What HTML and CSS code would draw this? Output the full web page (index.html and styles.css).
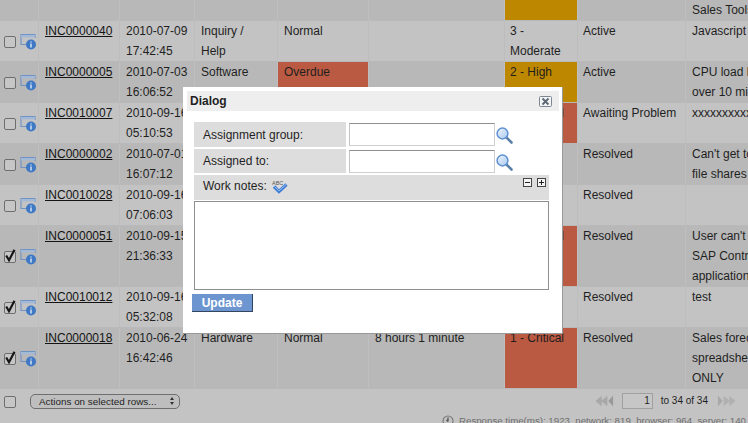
FILE: index.html
```html
<!DOCTYPE html>
<html lang="en">
<head>
<meta charset="utf-8">
<title>Incidents</title>
<link rel="stylesheet" href="styles.css">
</head>
<body>
<svg class="defs" width="0" height="0" aria-hidden="true">
  <defs>
    <linearGradient id="lens" x1="0" y1="0" x2="1" y2="1"><stop offset="0" stop-color="#eef5fd"/><stop offset="1" stop-color="#a9c8ee"/></linearGradient>
    <symbol id="info" viewBox="0 0 17 17">
      <path d="M15 5V1.5H1V11.5H6" fill="none" stroke="#6f93c4" stroke-width="1.1"/>
      <path d="M1 2h14v2.4H1z" fill="#a4b9d6"/>
      <circle cx="11" cy="11.5" r="5" fill="#3f78c4"/>
      <path d="M11 8.5v1M11 10.6V14.5" stroke="#dfeaf8" stroke-width="1.4"/>
    </symbol>
    <symbol id="search" viewBox="0 0 17 17">
      <path d="M10.5 10.5L15.5 15.5" stroke="#5b7fa8" stroke-width="2.6" stroke-linecap="round"/>
      <circle cx="6.5" cy="6.5" r="5.4" fill="url(#lens)" stroke="#5c90d2" stroke-width="1.5"/>
    </symbol>
    <symbol id="tick" viewBox="0 0 12 13">
      <path d="M2.2 6.5L5 11.2L10.5 0.8" fill="none" stroke="#161616" stroke-width="2.2"/>
    </symbol>
  </defs>
</svg>
<div class="page">
  <table class="grid">
    <colgroup>
      <col class="c0"><col class="c1"><col class="c2"><col class="c3"><col class="c4"><col class="c5"><col class="c6"><col class="c7"><col class="c8">
    </colgroup>
    <tbody>
      <tr class="dark cut">
        <td></td><td></td><td></td><td></td><td></td><td></td><td class="orange"></td><td></td><td>Sales Tools</td>
      </tr>
      <tr class="light">
        <td class="sel"><div class="selbox"><span class="cb"></span><svg class="info"><use href="#info"/></svg></div></td>
        <td><a href="#">INC0000040</a></td><td>2010-07-09<br>17:42:45</td><td>Inquiry /<br>Help</td><td>Normal</td><td></td><td>3 -<br>Moderate</td><td>Active</td><td>Javascript error</td>
      </tr>
      <tr class="dark">
        <td class="sel"><div class="selbox"><span class="cb"></span><svg class="info"><use href="#info"/></svg></div></td>
        <td><a href="#">INC0000005</a></td><td>2010-07-03<br>16:06:52</td><td>Software</td><td class="red">Overdue</td><td></td><td class="orange">2 - High</td><td>Active</td><td>CPU load high<br>over 10 minutes</td>
      </tr>
      <tr class="light">
        <td class="sel"><div class="selbox"><span class="cb"></span><svg class="info"><use href="#info"/></svg></div></td>
        <td><a href="#">INC0010007</a></td><td>2010-09-16<br>05:10:53</td><td></td><td></td><td></td><td class="red"><span class="tail">l</span></td><td>Awaiting Problem</td><td>xxxxxxxxxxxxxxxx</td>
      </tr>
      <tr class="dark">
        <td class="sel"><div class="selbox"><span class="cb"></span><svg class="info"><use href="#info"/></svg></div></td>
        <td><a href="#">INC0000002</a></td><td>2010-07-01<br>16:07:12</td><td></td><td></td><td></td><td></td><td>Resolved</td><td>Can't get to my<br>file shares</td>
      </tr>
      <tr class="light">
        <td class="sel"><div class="selbox"><span class="cb"></span><svg class="info"><use href="#info"/></svg></div></td>
        <td><a href="#">INC0010028</a></td><td>2010-09-16<br>07:06:03</td><td></td><td></td><td></td><td></td><td>Resolved</td><td></td>
      </tr>
      <tr class="dark">
        <td class="sel"><div class="selbox"><span class="cb"><svg class="tick"><use href="#tick"/></svg></span><svg class="info"><use href="#info"/></svg></div></td>
        <td><a href="#">INC0000051</a></td><td>2010-09-15<br>21:36:33</td><td></td><td></td><td></td><td class="red"><span class="tail">l</span></td><td>Resolved</td><td>User can't access<br>SAP Controlling<br>application</td>
      </tr>
      <tr class="light">
        <td class="sel"><div class="selbox"><span class="cb"><svg class="tick"><use href="#tick"/></svg></span><svg class="info"><use href="#info"/></svg></div></td>
        <td><a href="#">INC0010012</a></td><td>2010-09-16<br>05:32:08</td><td></td><td></td><td></td><td></td><td>Resolved</td><td>test</td>
      </tr>
      <tr class="dark">
        <td class="sel"><div class="selbox"><span class="cb"><svg class="tick"><use href="#tick"/></svg></span><svg class="info"><use href="#info"/></svg></div></td>
        <td><a href="#">INC0000018</a></td><td>2010-06-24<br>16:42:46</td><td>Hardware</td><td>Normal</td><td>8 hours 1 minute</td><td class="red">1 - Critical</td><td>Resolved</td><td>Sales forecast<br>spreadsheet is READ<br>ONLY</td>
      </tr>
    </tbody>
  </table>

  <div class="footer">
    <div class="bar">
      <span class="cb"></span>
      <div class="select"><span>Actions on selected rows...</span><span class="updown"><i class="up"></i><i class="down"></i></span></div>
      <div class="pager">
        <svg class="nav" viewBox="0 0 20 12"><path d="M7 0.5V11.5L0.5 6zM13 0.5V11.5L6.5 6z" fill="#a8a8a8"/><path d="M19 0.5V11.5L14 6z" fill="#999"/></svg>
        <span class="pageno">1</span>
        <span class="of">to 34 of 34</span>
        <svg class="nav" viewBox="0 0 20 12"><path d="M1 0.5V11.5L6 6z" fill="#a8a8a8"/><path d="M7 0.5V11.5L13.5 6zM13 0.5V11.5L19.5 6z" fill="#b0b0b0"/></svg>
      </div>
    </div>
    <div class="timing">
      <svg class="clock" viewBox="0 0 12 12"><circle cx="6" cy="6" r="5" fill="none" stroke="#777" stroke-width="1.1"/><path d="M6 2.5V6.5M6 6.5L4.5 5" stroke="#555" stroke-width="1.3" fill="none"/></svg>
      <span>Response time(ms): 1923, network: 819, browser: 964, server: 140</span>
    </div>
  </div>

  <div class="dialog">
    <div class="title">
      <span>Dialog</span>
      <svg class="close" viewBox="0 0 13 11"><rect x="0.5" y="0.5" width="12" height="10" rx="1" fill="#f4f4f4" stroke="#7b8794"/><path d="M3.5 2.5L9.5 8.5M9.5 2.5L3.5 8.5" stroke="#5d6875" stroke-width="1.9"/></svg>
    </div>
    <div class="form">
      <div class="field">
        <label class="flabel">Assignment group:</label>
        <span class="finput"></span>
        <svg class="search"><use href="#search"/></svg>
      </div>
      <div class="field second">
        <label class="flabel">Assigned to:</label>
        <span class="finput"></span>
        <svg class="search"><use href="#search"/></svg>
      </div>
      <div class="noteshead">
        <span class="noteslabel">Work notes:</span>
        <svg class="spell" viewBox="0 0 17 14">
          <text x="1" y="5" class="abc">ABC</text>
          <path d="M3 6.5L8 11.5L15.5 4.5" fill="none" stroke="#3f7ed6" stroke-width="3.2"/>
          <path d="M3.5 6.5L8 10.8L15 4.5" fill="none" stroke="#9cc0f0" stroke-width="1"/>
        </svg>
        <span class="sizers">
          <span class="sizer"><i class="h"></i></span>
          <span class="sizer"><i class="h"></i><i class="v"></i></span>
        </span>
      </div>
      <div class="notes"></div>
    </div>
    <button class="update" type="button">Update</button>
  </div>
</div>
</body>
</html>
```

FILE: styles.css
```css
html, body {
  margin: 0;
  padding: 0;
  height: 100%;
  overflow: hidden;
  background: #c3c3c3;
}

.defs { position: absolute; }

.page {
  position: relative;
  width: 748px;
  height: 423px;
  overflow: hidden;
  font-family: "Liberation Sans", Arial, sans-serif;
  font-size: 12px;
  line-height: 20px;
  color: #1f1f1f;
}

.grid {
  table-layout: fixed;
  width: 805px;
  border-collapse: separate;
  border-spacing: 0;
}

.c0 { width: 38px; }
.c1 { width: 81px; }
.c2 { width: 75px; }
.c3 { width: 83px; }
.c4 { width: 91px; }
.c5 { width: 136px; }
.c6 { width: 73px; }
.c7 { width: 108px; }
.c8 { width: 120px; }

.grid td {
  padding: 0 5px 0 6px;
  vertical-align: top;
  white-space: nowrap;
  overflow: hidden;
  border-left: 1px solid #bdbdbd;
  border-bottom: 1px solid #b9b9b9;
}
.grid td:first-child { border-left: 0; }
.grid td:nth-child(7),
.grid td:nth-child(8) { padding-left: 5px; }
.grid td.sel { padding: 0; vertical-align: middle; overflow: visible; }

.dark { background: #b8b8b8; }
.light { background: #c3c3c3; }
.dark td { border-left-color: #bfbfbf; }
.cut td { height: 20px; }

.grid td.orange { background: #bd8800; }
.grid td.red { background: #bb5a42; }
.tail { display: block; text-align: right; padding-right: 8px; }

.grid a { color: #141414; text-decoration: underline; }

.selbox {
  display: flex;
  align-items: center;
  padding: 1px 0 0 4px;
  gap: 4px;
}

.cb {
  box-sizing: border-box;
  display: block;
  flex: none;
  position: relative;
  width: 12px;
  height: 12px;
  border: 1px solid #6e6e6e;
  border-radius: 2px;
  background: #c6c6c6;
}
.tick {
  position: absolute;
  left: -1px;
  top: -3px;
  width: 12px;
  height: 13px;
}
.info { width: 17px; height: 17px; flex: none; }

.footer { background: #c3c3c3; }

.bar {
  display: flex;
  align-items: center;
  height: 24px;
  padding-left: 4px;
}
.bar > .cb { margin-top: 2px; }

.select {
  box-sizing: border-box;
  display: flex;
  align-items: center;
  justify-content: space-between;
  width: 150px;
  height: 15px;
  margin-left: 14px;
  padding: 0 2px 0 8px;
  border: 1px solid #6f6f6f;
  border-radius: 5px;
  background: #bebebe;
  font-size: 9.9px;
  line-height: 13px;
  white-space: nowrap;
}
.updown {
  display: flex;
  flex-direction: column;
  gap: 2px;
  width: 10px;
  align-items: center;
}
.up, .down {
  display: block;
  width: 0;
  height: 0;
  border-left: 2.5px solid transparent;
  border-right: 2.5px solid transparent;
}
.up { border-bottom: 3px solid #333; }
.down { border-top: 3px solid #333; }

.pager {
  display: flex;
  align-items: center;
  margin-left: auto;
  margin-right: 12px;
  font-size: 10px;
}
.nav { width: 19px; height: 12px; flex: none; }
.pageno {
  box-sizing: border-box;
  width: 31px;
  height: 16px;
  margin: 0 8px;
  padding-right: 2px;
  border: 1px solid #a0a0a0;
  background: #c6c6c6;
  text-align: right;
  line-height: 14px;
}
.of { margin-right: 9px; }

.timing {
  display: flex;
  align-items: center;
  justify-content: flex-end;
  gap: 5px;
  height: 15px;
  padding-right: 2px;
  color: #6f6f6f;
  font-size: 9.7px;
  white-space: nowrap;
}
.clock { width: 12px; height: 12px; flex: none; }

.dialog {
  box-sizing: border-box;
  position: absolute;
  left: 183px;
  top: 87px;
  width: 380px;
  height: 247px;
  padding: 3px 3px 0;
  background: #fff;
  border: 1px solid #999;
  border-width: 0 1px 1px 0;
}

.title {
  display: flex;
  align-items: center;
  justify-content: space-between;
  height: 20px;
  margin: 1px 0 0 1px;
  padding: 0 7px 0 3px;
  background: #eeeeee;
  font-weight: bold;
}
.close { width: 13px; height: 11px; }

.form {
  width: 355px;
  margin: 11px 0 0 8px;
}

.field {
  display: flex;
  align-items: center;
  height: 25px;
}
.second { height: 24px; margin-top: 2px; }

.flabel {
  box-sizing: border-box;
  width: 152px;
  height: 100%;
  padding-left: 9px;
  line-height: 26px;
  background: #dddddd;
}
.second .flabel { line-height: 24px; }
.finput {
  box-sizing: border-box;
  width: 146px;
  height: 23px;
  margin-left: 3px;
  border: 1px solid #cfcfcf;
  border-top-color: #8f8f8f;
  border-left-color: #c4c4c4;
}
.search { width: 17px; height: 17px; margin: 2px 0 0 1px; }

.noteshead {
  display: flex;
  align-items: flex-start;
  position: relative;
  height: 25px;
  margin-top: 2px;
  padding-left: 9px;
  background: #dddddd;
}
.noteslabel { line-height: 22px; }
.spell { width: 17px; height: 14px; margin: 5px 0 0 4px; }
.abc {
  font-family: "Liberation Sans", Arial, sans-serif;
  font-size: 5.5px;
  fill: #555;
}
.sizers {
  position: absolute;
  right: 3px;
  top: 3px;
  display: flex;
  gap: 5px;
}
.sizer {
  box-sizing: border-box;
  position: relative;
  width: 9px;
  height: 9px;
  border: 1px solid #444;
  background: #f5f5f5;
}
.h, .v {
  position: absolute;
  background: #222;
}
.h { left: 1px; top: 3px; width: 5px; height: 1px; }
.v { left: 3px; top: 1px; width: 1px; height: 5px; }

.notes {
  box-sizing: border-box;
  height: 89px;
  margin-top: 1px;
  border: 1px solid #8f8f8f;
  background: #fff;
}

.update {
  display: block;
  box-sizing: border-box;
  width: 61px;
  height: 18px;
  margin: 4px 0 0 6px;
  padding: 0;
  border: 0;
  border-right: 1px solid #33455f;
  border-bottom: 1px solid #33455f;
  border-radius: 0;
  background: #6d96d0;
  color: #fff;
  font-family: "Liberation Sans", Arial, sans-serif;
  font-size: 12px;
  font-weight: bold;
  line-height: 16px;
}
```
